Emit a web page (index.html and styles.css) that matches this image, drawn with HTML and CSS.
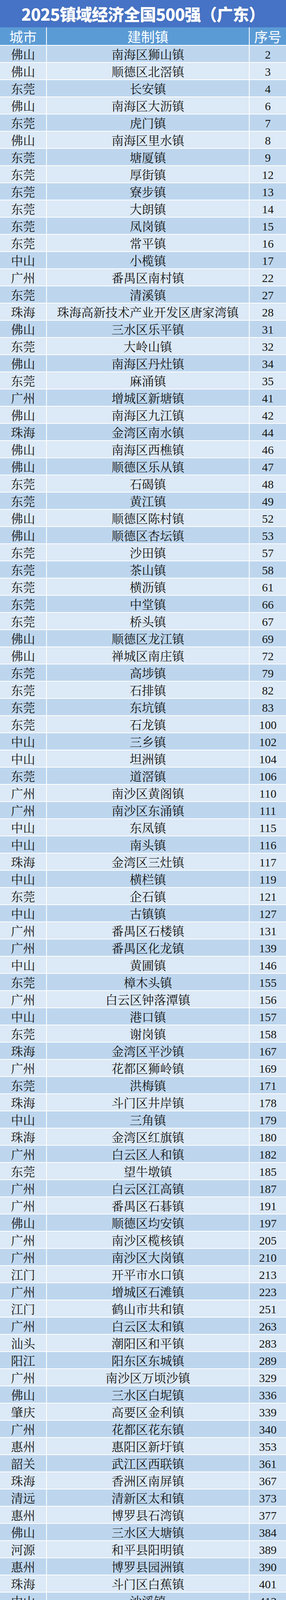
FILE: index.html
```html
<!DOCTYPE html>
<html lang="zh-CN">
<head>
<meta charset="utf-8">
<title>2025镇域经济全国500强（广东）</title>
<link rel="stylesheet" href="styles.css">
</head>
<body>
<div class="sheet">
  <div class="title">2025镇域经济全国500强（广东）</div>
  <div class="row head"><div class="c city">城市</div><div class="c town">建制镇</div><div class="c num">序号</div></div>
  <div class="row"><div class="c city">佛山</div><div class="c town">南海区狮山镇</div><div class="c num">2</div></div>
  <div class="row"><div class="c city">佛山</div><div class="c town">顺德区北滘镇</div><div class="c num">3</div></div>
  <div class="row"><div class="c city">东莞</div><div class="c town">长安镇</div><div class="c num">4</div></div>
  <div class="row"><div class="c city">佛山</div><div class="c town">南海区大沥镇</div><div class="c num">6</div></div>
  <div class="row"><div class="c city">东莞</div><div class="c town">虎门镇</div><div class="c num">7</div></div>
  <div class="row"><div class="c city">佛山</div><div class="c town">南海区里水镇</div><div class="c num">8</div></div>
  <div class="row"><div class="c city">东莞</div><div class="c town">塘厦镇</div><div class="c num">9</div></div>
  <div class="row"><div class="c city">东莞</div><div class="c town">厚街镇</div><div class="c num">12</div></div>
  <div class="row"><div class="c city">东莞</div><div class="c town">寮步镇</div><div class="c num">13</div></div>
  <div class="row"><div class="c city">东莞</div><div class="c town">大朗镇</div><div class="c num">14</div></div>
  <div class="row"><div class="c city">东莞</div><div class="c town">凤岗镇</div><div class="c num">15</div></div>
  <div class="row"><div class="c city">东莞</div><div class="c town">常平镇</div><div class="c num">16</div></div>
  <div class="row"><div class="c city">中山</div><div class="c town">小榄镇</div><div class="c num">17</div></div>
  <div class="row"><div class="c city">广州</div><div class="c town">番禺区南村镇</div><div class="c num">22</div></div>
  <div class="row"><div class="c city">东莞</div><div class="c town">清溪镇</div><div class="c num">27</div></div>
  <div class="row"><div class="c city">珠海</div><div class="c town">珠海高新技术产业开发区唐家湾镇</div><div class="c num">28</div></div>
  <div class="row"><div class="c city">佛山</div><div class="c town">三水区乐平镇</div><div class="c num">31</div></div>
  <div class="row"><div class="c city">东莞</div><div class="c town">大岭山镇</div><div class="c num">32</div></div>
  <div class="row"><div class="c city">佛山</div><div class="c town">南海区丹灶镇</div><div class="c num">34</div></div>
  <div class="row"><div class="c city">东莞</div><div class="c town">麻涌镇</div><div class="c num">35</div></div>
  <div class="row"><div class="c city">广州</div><div class="c town">增城区新塘镇</div><div class="c num">41</div></div>
  <div class="row"><div class="c city">佛山</div><div class="c town">南海区九江镇</div><div class="c num">42</div></div>
  <div class="row"><div class="c city">珠海</div><div class="c town">金湾区南水镇</div><div class="c num">44</div></div>
  <div class="row"><div class="c city">佛山</div><div class="c town">南海区西樵镇</div><div class="c num">46</div></div>
  <div class="row"><div class="c city">佛山</div><div class="c town">顺德区乐从镇</div><div class="c num">47</div></div>
  <div class="row"><div class="c city">东莞</div><div class="c town">石碣镇</div><div class="c num">48</div></div>
  <div class="row"><div class="c city">东莞</div><div class="c town">黄江镇</div><div class="c num">49</div></div>
  <div class="row"><div class="c city">佛山</div><div class="c town">顺德区陈村镇</div><div class="c num">52</div></div>
  <div class="row"><div class="c city">佛山</div><div class="c town">顺德区杏坛镇</div><div class="c num">53</div></div>
  <div class="row"><div class="c city">东莞</div><div class="c town">沙田镇</div><div class="c num">57</div></div>
  <div class="row"><div class="c city">东莞</div><div class="c town">茶山镇</div><div class="c num">58</div></div>
  <div class="row"><div class="c city">东莞</div><div class="c town">横沥镇</div><div class="c num">61</div></div>
  <div class="row"><div class="c city">东莞</div><div class="c town">中堂镇</div><div class="c num">66</div></div>
  <div class="row"><div class="c city">东莞</div><div class="c town">桥头镇</div><div class="c num">67</div></div>
  <div class="row"><div class="c city">佛山</div><div class="c town">顺德区龙江镇</div><div class="c num">69</div></div>
  <div class="row"><div class="c city">佛山</div><div class="c town">禅城区南庄镇</div><div class="c num">72</div></div>
  <div class="row"><div class="c city">东莞</div><div class="c town">高埗镇</div><div class="c num">79</div></div>
  <div class="row"><div class="c city">东莞</div><div class="c town">石排镇</div><div class="c num">82</div></div>
  <div class="row"><div class="c city">东莞</div><div class="c town">东坑镇</div><div class="c num">83</div></div>
  <div class="row"><div class="c city">东莞</div><div class="c town">石龙镇</div><div class="c num">100</div></div>
  <div class="row"><div class="c city">中山</div><div class="c town">三乡镇</div><div class="c num">102</div></div>
  <div class="row"><div class="c city">中山</div><div class="c town">坦洲镇</div><div class="c num">104</div></div>
  <div class="row"><div class="c city">东莞</div><div class="c town">道滘镇</div><div class="c num">106</div></div>
  <div class="row"><div class="c city">广州</div><div class="c town">南沙区黄阁镇</div><div class="c num">110</div></div>
  <div class="row"><div class="c city">广州</div><div class="c town">南沙区东涌镇</div><div class="c num">111</div></div>
  <div class="row"><div class="c city">中山</div><div class="c town">东凤镇</div><div class="c num">115</div></div>
  <div class="row"><div class="c city">中山</div><div class="c town">南头镇</div><div class="c num">116</div></div>
  <div class="row"><div class="c city">珠海</div><div class="c town">金湾区三灶镇</div><div class="c num">117</div></div>
  <div class="row"><div class="c city">中山</div><div class="c town">横栏镇</div><div class="c num">119</div></div>
  <div class="row"><div class="c city">东莞</div><div class="c town">企石镇</div><div class="c num">121</div></div>
  <div class="row"><div class="c city">中山</div><div class="c town">古镇镇</div><div class="c num">127</div></div>
  <div class="row"><div class="c city">广州</div><div class="c town">番禺区石楼镇</div><div class="c num">131</div></div>
  <div class="row"><div class="c city">广州</div><div class="c town">番禺区化龙镇</div><div class="c num">139</div></div>
  <div class="row"><div class="c city">中山</div><div class="c town">黄圃镇</div><div class="c num">146</div></div>
  <div class="row"><div class="c city">东莞</div><div class="c town">樟木头镇</div><div class="c num">155</div></div>
  <div class="row"><div class="c city">广州</div><div class="c town">白云区钟落潭镇</div><div class="c num">156</div></div>
  <div class="row"><div class="c city">中山</div><div class="c town">港口镇</div><div class="c num">157</div></div>
  <div class="row"><div class="c city">东莞</div><div class="c town">谢岗镇</div><div class="c num">158</div></div>
  <div class="row"><div class="c city">珠海</div><div class="c town">金湾区平沙镇</div><div class="c num">167</div></div>
  <div class="row"><div class="c city">广州</div><div class="c town">花都区狮岭镇</div><div class="c num">169</div></div>
  <div class="row"><div class="c city">东莞</div><div class="c town">洪梅镇</div><div class="c num">171</div></div>
  <div class="row"><div class="c city">珠海</div><div class="c town">斗门区井岸镇</div><div class="c num">178</div></div>
  <div class="row"><div class="c city">中山</div><div class="c town">三角镇</div><div class="c num">179</div></div>
  <div class="row"><div class="c city">珠海</div><div class="c town">金湾区红旗镇</div><div class="c num">180</div></div>
  <div class="row"><div class="c city">广州</div><div class="c town">白云区人和镇</div><div class="c num">182</div></div>
  <div class="row"><div class="c city">东莞</div><div class="c town">望牛墩镇</div><div class="c num">185</div></div>
  <div class="row"><div class="c city">广州</div><div class="c town">白云区江高镇</div><div class="c num">187</div></div>
  <div class="row"><div class="c city">广州</div><div class="c town">番禺区石碁镇</div><div class="c num">191</div></div>
  <div class="row"><div class="c city">佛山</div><div class="c town">顺德区均安镇</div><div class="c num">197</div></div>
  <div class="row"><div class="c city">广州</div><div class="c town">南沙区榄核镇</div><div class="c num">205</div></div>
  <div class="row"><div class="c city">广州</div><div class="c town">南沙区大岗镇</div><div class="c num">210</div></div>
  <div class="row"><div class="c city">江门</div><div class="c town">开平市水口镇</div><div class="c num">213</div></div>
  <div class="row"><div class="c city">广州</div><div class="c town">增城区石滩镇</div><div class="c num">223</div></div>
  <div class="row"><div class="c city">江门</div><div class="c town">鹤山市共和镇</div><div class="c num">251</div></div>
  <div class="row"><div class="c city">广州</div><div class="c town">白云区太和镇</div><div class="c num">263</div></div>
  <div class="row"><div class="c city">汕头</div><div class="c town">潮阳区和平镇</div><div class="c num">283</div></div>
  <div class="row"><div class="c city">阳江</div><div class="c town">阳东区东城镇</div><div class="c num">289</div></div>
  <div class="row"><div class="c city">广州</div><div class="c town">南沙区万顷沙镇</div><div class="c num">329</div></div>
  <div class="row"><div class="c city">佛山</div><div class="c town">三水区白坭镇</div><div class="c num">336</div></div>
  <div class="row"><div class="c city">肇庆</div><div class="c town">高要区金利镇</div><div class="c num">339</div></div>
  <div class="row"><div class="c city">广州</div><div class="c town">花都区花东镇</div><div class="c num">340</div></div>
  <div class="row"><div class="c city">惠州</div><div class="c town">惠阳区新圩镇</div><div class="c num">353</div></div>
  <div class="row"><div class="c city">韶关</div><div class="c town">武江区西联镇</div><div class="c num">361</div></div>
  <div class="row"><div class="c city">珠海</div><div class="c town">香洲区南屏镇</div><div class="c num">367</div></div>
  <div class="row"><div class="c city">清远</div><div class="c town">清新区太和镇</div><div class="c num">373</div></div>
  <div class="row"><div class="c city">惠州</div><div class="c town">博罗县石湾镇</div><div class="c num">377</div></div>
  <div class="row"><div class="c city">佛山</div><div class="c town">三水区大塘镇</div><div class="c num">384</div></div>
  <div class="row"><div class="c city">河源</div><div class="c town">和平县阳明镇</div><div class="c num">389</div></div>
  <div class="row"><div class="c city">惠州</div><div class="c town">博罗县园洲镇</div><div class="c num">390</div></div>
  <div class="row"><div class="c city">珠海</div><div class="c town">斗门区白蕉镇</div><div class="c num">401</div></div>
  <div class="row"><div class="c city">中山</div><div class="c town">沙溪镇</div><div class="c num">413</div></div>
  <div class="row"><div class="c city">珠海</div><div class="c town">斗门区乾务镇</div><div class="c num">417</div></div>
</div>
</body>
</html>
```

FILE: styles.css
```css
html, body {
  margin: 0;
  padding: 0;
  background: #ffffff;
}

.sheet {
  width: 732px;
  display: flex;
  flex-direction: column;
  gap: 2px;
  background: #ffffff;
}

.title {
  flex: none;
  height: 70px;
  margin-bottom: -2px;
  background: #4673c5;
  color: #ffffff;
  font-family: "Noto Sans CJK SC", "Noto Sans", sans-serif;
  font-weight: 900;
  font-size: 42px;
  line-height: 70px;
  text-align: center;
  letter-spacing: -1px;
  text-shadow: 0 0 2px rgba(40, 70, 140, 0.6);
}

.row {
  flex: none;
  display: grid;
  grid-template-columns: 118px 1fr 93px;
  grid-template-rows: 42px;
  column-gap: 2px;
  height: 42px;
}

.c {
  display: flex;
  align-items: center;
  justify-content: center;
  white-space: nowrap;
  font-family: "Liberation Serif", "Noto Serif CJK SC", "Noto Sans CJK SC", serif;
  font-size: 31px;
  line-height: 1;
  color: #141414;
  padding-top: 4px;
  box-sizing: border-box;
}

.row:nth-child(odd) .c {
  background: #bdd6ee;
}

.row:nth-child(even) .c {
  background: #dce9f6;
}

.row.head {
  height: 45px;
  grid-template-rows: 45px;
}

.row.head .c {
  background: #5b9bd5;
  color: #ffffff;
  font-family: "Noto Sans CJK SC", "Noto Sans", sans-serif;
  font-size: 35px;
  line-height: 1;
  padding-top: 0;
}

.num {
  font-size: 30px;
}
```
